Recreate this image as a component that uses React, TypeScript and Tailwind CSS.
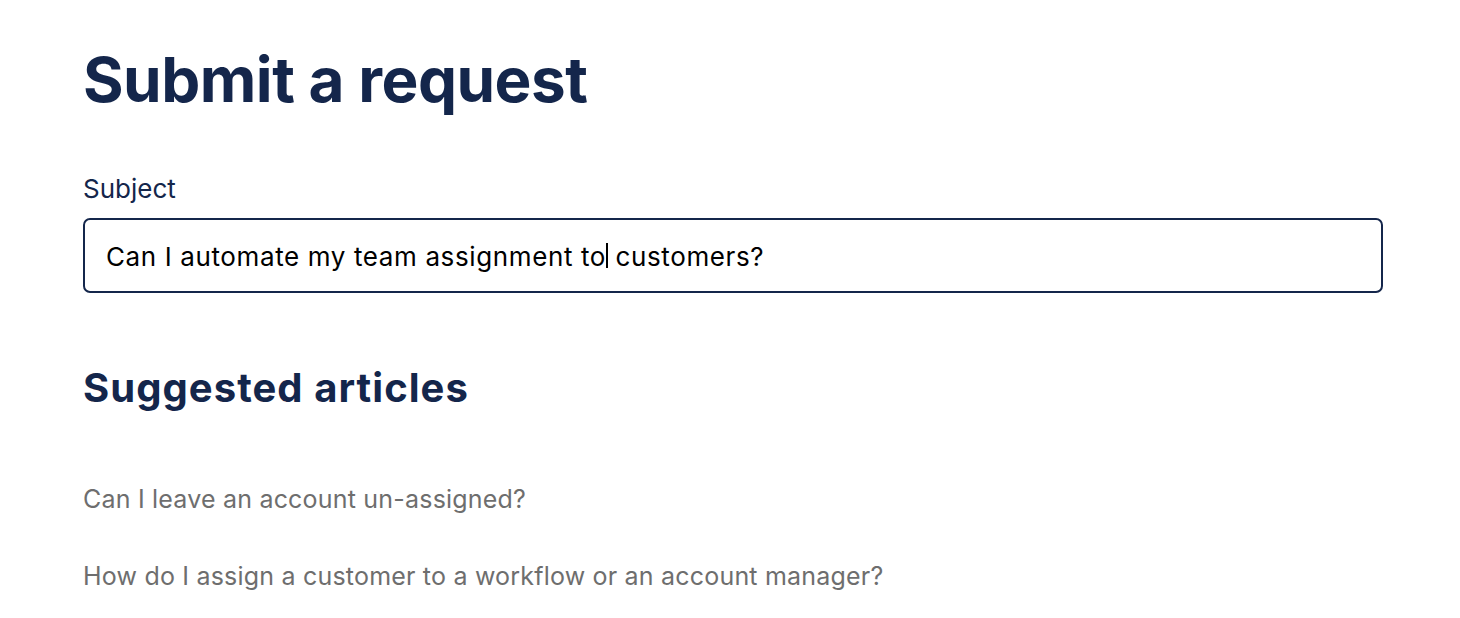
import React from "react";

export default function App() {
  return (
    <div className="min-h-screen bg-white" style={{ fontFamily: "Inter, 'Noto Sans', sans-serif" }}>
      <div className="pl-[83px] pt-[40px] w-[1383px]">
        <h1 className="text-[62px] leading-[80px] font-bold tracking-[-0.5px] text-[#14264b]">Submit a request</h1>
        <div className="mt-[53px] text-[26px] leading-[32px] text-[#14264b]">Subject</div>
        <div className="mt-[13px] h-[75px] rounded-[7px] border-2 border-[#14264b] flex items-center pl-[21px] pt-[3px]">
          <span className="text-[26px] leading-[32px] tracking-[0.62px] text-black whitespace-pre">Can I automate my team assignment to</span>
          <span className="inline-block w-[1.5px] h-[25px] bg-black mb-[3px]"></span>
          <span className="text-[26px] leading-[32px] tracking-[0.62px] text-black whitespace-pre"> customers?</span>
        </div>
        <h2 className="mt-[69px] text-[40px] leading-[52px] font-bold tracking-[1.05px] text-[#14264b]">Suggested articles</h2>
        <ul className="mt-[69px] flex flex-col gap-[45px] text-[25px] leading-[32px] tracking-[0.2px] text-[#6e6e6e]">
          <li>Can I leave an account un-assigned?</li>
          <li>How do I assign a customer to a workflow or an account manager?</li>
        </ul>
      </div>
    </div>
  );
}
